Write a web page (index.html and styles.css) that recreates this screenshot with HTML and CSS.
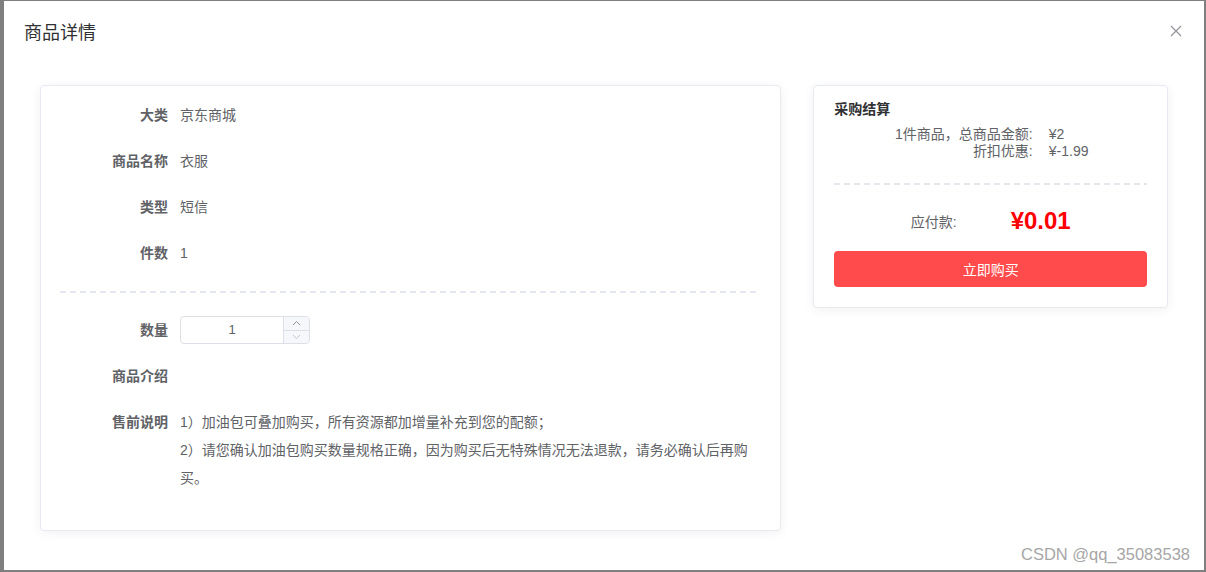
FILE: index.html
```html
<!DOCTYPE html>
<html lang="zh">
<head>
<meta charset="utf-8">
<title>商品详情</title>
<link rel="stylesheet" href="styles.css">
</head>
<body>
<div class="dialog">
  <div class="dialog-header">
    <span class="dialog-title">商品详情</span>
    <button class="dialog-close" aria-label="close">
      <svg width="12" height="12" viewBox="0 0 12 12"><path d="M1 1L11 11M11 1L1 11" stroke="#909399" stroke-width="1.2" fill="none"/></svg>
    </button>
  </div>
  <div class="dialog-body">
    <div class="col-main">
      <div class="card detail">
        <div class="item"><div class="label">大类</div><div class="value">京东商城</div></div>
        <div class="item"><div class="label">商品名称</div><div class="value">衣服</div></div>
        <div class="item"><div class="label">类型</div><div class="value">短信</div></div>
        <div class="item"><div class="label">件数</div><div class="value">1</div></div>
        <div class="dash dash-main"></div>
        <div class="item"><div class="label">数量</div>
          <div class="value">
            <div class="num-input">
              <div class="num-field">1</div>
              <div class="num-ctrl">
                <div class="num-btn up"><svg width="9" height="6" viewBox="0 0 9 6"><path d="M1 5L4.5 1.5L8 5" stroke="#909399" stroke-width="1" fill="none"/></svg></div>
                <div class="num-btn down"><svg width="9" height="6" viewBox="0 0 9 6"><path d="M1 1L4.5 4.5L8 1" stroke="#c0c4cc" stroke-width="1" fill="none"/></svg></div>
              </div>
            </div>
          </div>
        </div>
        <div class="item"><div class="label">商品介绍</div><div class="value"></div></div>
        <div class="item"><div class="label">售前说明</div>
          <div class="value desc">
            <p>1）加油包可叠加购买，所有资源都加增量补充到您的配额；</p>
            <p>2）请您确认加油包购买数量规格正确，因为购买后无特殊情况无法退款，请务必确认后再购买。</p>
          </div>
        </div>
      </div>
    </div>
    <div class="col-side">
      <div class="card summary">
        <div class="sum-title">采购结算</div>
        <div class="sum-grid">
          <div class="sum-label">1件商品，总商品金额:</div><div class="sum-value">¥2</div>
          <div class="sum-label">折扣优惠:</div><div class="sum-value">¥-1.99</div>
        </div>
        <div class="dash dash-side"></div>
        <div class="pay-row">
          <div class="pay-label">应付款:</div>
          <div class="pay-value">¥0.01</div>
        </div>
        <button class="buy-btn">立即购买</button>
      </div>
    </div>
  </div>
</div>
<div class="watermark">CSDN @qq_35083538</div>
</body>
</html>
```
FILE: styles.css
```css
* { box-sizing: border-box; }
html, body { margin: 0; height: 100%; }
body {
  background: #7f7f7f;
  padding: 1px 2px 2px 4px;
  font-family: "Liberation Sans", "Noto Sans CJK SC", sans-serif;
  color: #606266;
  font-size: 14px;
  position: relative;
  overflow: hidden;
}
.dialog {
  background: #fff;
  width: 1200px;
  height: 569px;
}
.dialog-header {
  padding: 20px 20px 10px;
  display: flex;
  align-items: center;
  justify-content: space-between;
}
.dialog-title {
  font-size: 18px;
  line-height: 24px;
  color: #303133;
}
.dialog-close {
  border: 0;
  background: none;
  padding: 0;
  margin-right: 2px;
  margin-top: -5px;
  width: 12px;
  height: 12px;
  display: flex;
}
.dialog-body {
  padding: 30px 20px 30px;
  display: flex;
}
.col-main { width: 66.6667%; padding: 0 16px; }
.col-side { width: 33.3333%; padding: 0 16px; }
.card {
  border: 1px solid #e8eaf2;
  border-radius: 4px;
  background: #fff;
  box-shadow: 0 2px 12px 0 rgba(0,0,0,0.06);
}
.detail { padding: 15px 20px 20px 19px; }
.item {
  display: flex;
  margin-bottom: 18px;
  line-height: 28px;
}
.label {
  width: 120px;
  flex: none;
  text-align: right;
  padding-right: 12px;
  font-weight: bold;
  color: #606266;
}
.value { flex: 1; color: #606266; min-height: 28px; }
.desc p { margin: 0; }
.dash {
  height: 2px;
  background: repeating-linear-gradient(to right, #e4e7ed 0 6px, transparent 6px 10px);
}
.dash-main { margin: 24px 0 23px; }
.num-input {
  width: 130px;
  height: 28px;
  border: 1px solid #dcdfe6;
  border-radius: 4px;
  display: flex;
  overflow: hidden;
}
.num-field {
  flex: 1;
  text-align: center;
  line-height: 26px;
  font-size: 13px;
  color: #606266;
}
.num-ctrl {
  width: 26px;
  border-left: 1px solid #dcdfe6;
  display: flex;
  flex-direction: column;
  background: #f5f7fa;
}
.num-btn {
  flex: 1;
  display: flex;
  align-items: center;
  justify-content: center;
}
.num-btn.up { border-bottom: 1px solid #dcdfe6; }
.summary { padding: 15px 20px 20px; }
.sum-title {
  font-weight: bold;
  color: #303133;
  line-height: 17px;
  font-size: 14px;
}
.sum-grid {
  margin-top: 8px;
  display: grid;
  grid-template-columns: 2fr 1fr;
  line-height: 17px;
  color: #606266;
}
.sum-label { text-align: right; padding-right: 10px; }
.sum-value { padding-left: 6px; }
.dash-side { margin-top: 23px; }
.pay-row {
  margin-top: 19px;
  display: grid;
  grid-template-columns: 1fr 1fr;
  align-items: center;
  line-height: 30px;
}
.pay-label { text-align: right; padding-right: 34px; color: #606266; padding-top: 3px; }
.pay-value {
  padding-left: 20px;
  color: #ff0000;
  font-weight: bold;
  font-size: 24px;
}
.buy-btn {
  margin-top: 14px;
  width: 100%;
  height: 36px;
  border: 0;
  border-radius: 4px;
  background: #ff4b4b;
  color: #fff;
  font-family: inherit;
  font-size: 14px;
}
.watermark {
  position: absolute;
  right: 16px;
  top: 544px;
  font-size: 16.5px;
  color: #a6a6a6;
  line-height: 20px;
}
```
